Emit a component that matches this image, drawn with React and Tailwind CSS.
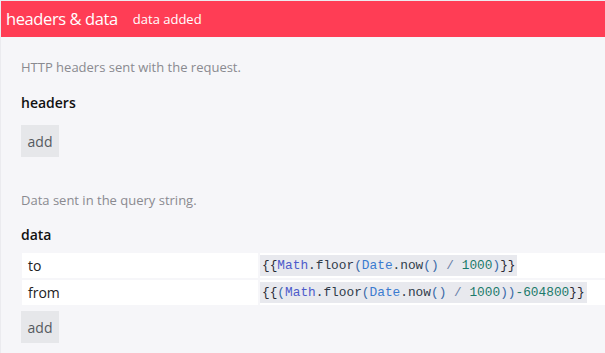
import React from "react";

const font = { fontFamily: '"Open Sans", "Noto Sans", sans-serif' };

function Code({ children }) {
  return (
    <span
      className="inline-block h-[21px] pl-[2px] pr-[2px] bg-[#e8e9ee] text-[12.8px] leading-[21px] text-[#2b2b36] whitespace-pre"
      style={{ fontFamily: '"Liberation Mono", "DejaVu Sans Mono", monospace' }}
    >
      {children}
    </span>
  );
}

const M = ({ c }) => <span className="text-[#4d5bcb]">{c}</span>;
const D = ({ c }) => <span className="text-[#3b7bd0]">{c}</span>;
const P = ({ c }) => <span className="text-[#3a6aa8]">{c}</span>;
const N = ({ c }) => <span className="text-[#1a7a6a]">{c}</span>;
const F = ({ c }) => <span className="text-[#2f3b4a]">{c}</span>;
const S = ({ c }) => <span className="text-[#6a7fa8]">{c}</span>;

function Row({ k, v }) {
  return (
    <div className="flex h-[25px] gap-[2px]">
      <div className="w-[236px] bg-white pl-[6px] flex items-center text-[14px] text-[#222]">{k}</div>
      <div className="flex-1 bg-white flex items-center">{v}</div>
    </div>
  );
}

function AddButton() {
  return (
    <div className="w-[38px] h-[32px] bg-[#e6e7ea] flex items-center justify-center text-[14px] text-[#555a60]">
      add
    </div>
  );
}

export default function App() {
  return (
    <div className="w-[605px] h-[353px] bg-[#f6f6f9] border-l border-t border-[#ebebef] overflow-hidden" style={font}>
      <div className="h-[36px] bg-[#ff3d55] flex items-center pl-[5px] text-white">
        <span className="text-[16.5px] tracking-[-0.4px] leading-[24px]">headers &amp; data</span>
        <span className="text-[13px] ml-[15px] leading-[20px]">data added</span>
      </div>
      <div className="pl-[20px] pt-[20px]">
        <div className="h-[20px] leading-[20px] text-[13px] text-[#8a8a90]">HTTP headers sent with the request.</div>
        <div className="mt-[16px] h-[20px] leading-[20px] text-[14px] font-semibold text-[#111]">headers</div>
        <div className="mt-[12px]"><AddButton /></div>
        <div className="mt-[33px] h-[20px] leading-[20px] text-[13px] text-[#8a8a90]">Data sent in the query string.</div>
        <div className="mt-[15px] h-[20px] leading-[20px] text-[14px] font-semibold text-[#111]">data</div>
        <div className="mt-[8px] ml-[1px] flex flex-col gap-[2px]">
          <Row
            k="to"
            v={
              <Code>
                {"{{"}<M c="Math" /><F c=".floor" /><P c="(" /><D c="Date" /><F c="." /><F c="now" /><P c="()" /> <S c="/" /> <N c="1000" /><P c=")" />{"}}"}
              </Code>
            }
          />
          <Row
            k="from"
            v={
              <Code>
                {"{{"}<P c="(" /><M c="Math" /><F c=".floor" /><P c="(" /><D c="Date" /><F c="." /><F c="now" /><P c="()" /> <S c="/" /> <N c="1000" /><P c="))" /><N c="-604800" />{"}}"}
              </Code>
            }
          />
        </div>
        <div className="mt-[6px]"><AddButton /></div>
      </div>
    </div>
  );
}
